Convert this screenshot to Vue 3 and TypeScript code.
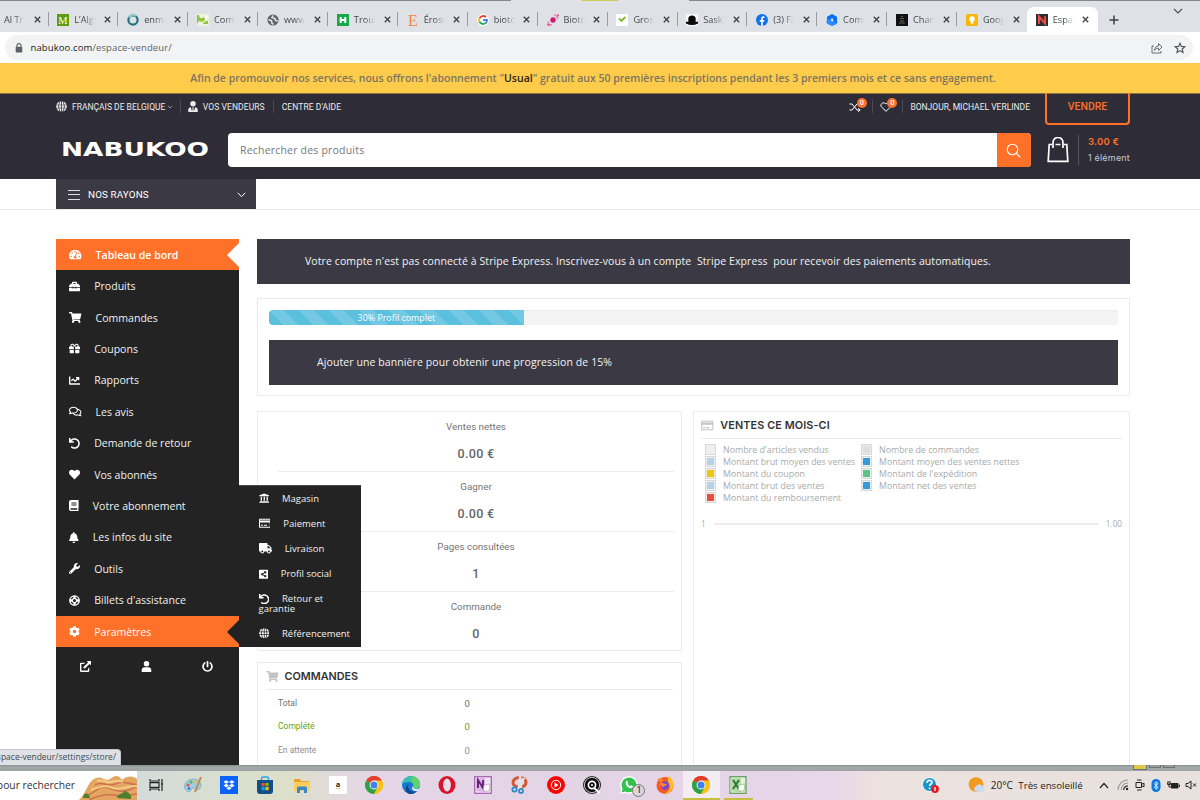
<script setup lang="ts">
interface Glyph { w: number; h: number; body: string }

const cartPath = '<path d="M528.12 301.319l47.273-208C578.806 78.301 567.391 64 551.99 64H159.208l-9.166-44.81C147.758 8.021 137.93 0 126.529 0H24C10.745 0 0 10.745 0 24v16c0 13.255 10.745 24 24 24h69.883l70.248 343.435C147.325 417.1 136 435.222 136 456c0 30.928 25.072 56 56 56s56-25.072 56-56c0-15.674-6.447-29.835-16.824-40h209.647C430.447 426.165 424 440.326 424 456c0 30.928 25.072 56 56 56s56-25.072 56-56c0-22.172-12.888-41.332-31.579-50.405l5.517-24.276c3.413-15.018-8.002-29.319-23.403-29.319H218.117l-6.545-32h293.145c11.206 0 20.92-7.754 23.403-18.681z"/>'
const globe = '<path d="M238 10v160h-86c10-84 44-150 86-160zm36 0v160h86c-10-84-44-150-86-160zM148 202h90v108h-90c-5-36-5-72 0-108zm126 0h90c5 36 5 72 0 108h-90zM152 342h86v160c-42-10-76-76-86-160zm122 0h86c-10 84-44 150-86 160zM168 24c-28 36-44 86-50 146H24C50 98 102 46 168 24zm176 0c28 36 44 86 50 146h94C462 98 410 46 344 24zM14 202h100c-4 36-4 72 0 108H14c-8-36-8-72 0-108zm384 0h100c8 36 8 72 0 108H398c4-36 4-72 0-108zM24 342h94c6 60 22 110 50 146C102 466 50 414 24 342zm464 0h-94c-6 60-22 110-50 146 66-22 118-74 144-146z"/>'

const glyphs: Record<string, Glyph> = {
  gauge: { w: 576, h: 512, body: '<path fill-rule="evenodd" d="M288 32C129 32 0 161 0 320c0 53 14 102 39 145 6 10 16 15 27 15h444c11 0 21-5 27-15 25-43 39-92 39-145C576 161 447 32 288 32zm0 64a34 34 0 1 1 0 68 34 34 0 0 1 0-68zM96 384a34 34 0 1 1 0-68 34 34 0 0 1 0 68zm48-160a34 34 0 1 1 0-68 34 34 0 0 1 0 68zm206 204H226c-20-50 5-96 50-107l72-168c8-18 38-8 31 14l-63 170c31 21 46 55 34 91zm84-204a32 32 0 0 1-28-50 34 34 0 1 1 28 50zm46 160a34 34 0 1 1 0-68 34 34 0 0 1 0 68z"/>' },
  case: { w: 512, h: 512, body: '<path fill-rule="evenodd" d="M140 128V85c0-28 20-48 48-48h136c28 0 48 20 48 48v43h60l70 76c7 8 10 15 10 25v67H352v-24h-60v24h-72v-24h-60v24H0v-67c0-10 3-17 10-25l70-76zm52 0h128V90H192zM0 328h160v24h60v-24h72v24h60v-24h160v120c0 18-14 32-32 32H32c-18 0-32-14-32-32z"/>' },
  cart: { w: 576, h: 512, body: cartPath },
  gift: { w: 512, h: 512, body: '<path d="M32 448c0 18 14 32 32 32h160V320H32v128zm256 32h160c18 0 32-14 32-32V320H288v160zm192-320h-42c6-12 10-26 10-40a88 88 0 0 0-88-88c-41 0-67 21-103 70-36-49-62-70-103-70a88 88 0 0 0-88 88c0 14 4 28 10 40H32c-18 0-32 14-32 32v80c0 9 7 16 16 16h208V160h64v128h208c9 0 16-7 16-16v-80c0-18-14-32-32-32zm-326 0a40 40 0 0 1 0-80c21 0 32 3 86 80zm206 0h-86c54-77 64-80 86-80a40 40 0 0 1 0 80z"/>' },
  chart: { w: 512, h: 512, body: '<path d="M496 384H64V80c0-9-7-16-16-16H16C7 64 0 71 0 80v336c0 18 14 32 32 32h464c9 0 16-7 16-16v-32c0-9-7-16-16-16zM464 96H346c-21 0-32 26-17 41l32 32-73 74-74-74c-12-12-33-12-45 0l-68 68a16 16 0 0 0 0 23l22 22c7 7 17 7 23 0l46-45 73 73c13 13 33 13 46 0l96-96 32 32c15 15 41 4 41-17V112c0-9-7-16-16-16z"/>' },
  chat: { w: 576, h: 512, body: '<path fill-rule="evenodd" d="M532 386c27-27 44-61 44-98 0-80-76-146-172-158C374 74 297 32 208 32 93 32 0 104 0 192c0 37 17 71 44 98-15 31-37 55-38 56-6 7-8 16-4 25 3 8 12 13 21 13 52 0 96-18 126-36 6 1 12 3 19 3 30 58 107 97 200 97 20 0 40-2 59-7 30 18 74 39 126 39 9 0 18-5 21-13 4-9 2-18-4-25-1-1-23-25-38-56zM142 295c-24 16-38 24-62 31 6-12 13-30 21-53-29-24-53-43-53-81 0-62 72-112 160-112s160 50 160 112-72 112-160 112c-21 0-45-3-66-9zm292 96c-19 6-41 9-66 9-68 0-120-24-145-58 110-7 193-72 193-150v-10c62 14 112 52 112 106 0 38-24 57-53 81 8 23 15 41 21 53-24-7-38-15-62-31z"/>' },
  undo: { w: 512, h: 512, body: '<path d="M212.333 224.333H12c-6.627 0-12-5.373-12-12V12C0 5.373 5.373 0 12 0h48c6.627 0 12 5.373 12 12v78.112C117.773 39.279 184.26 7.47 258.175 8.007c136.906.994 246.448 111.623 246.157 248.532C504.041 393.258 393.12 504 256.333 504c-64.089 0-122.496-24.313-166.51-64.215-5.099-4.622-5.334-12.554-.467-17.42l33.967-33.967c4.474-4.474 11.662-4.717 16.401-.525C170.76 415.336 211.58 432 256.333 432c97.268 0 176-78.716 176-176 0-97.267-78.716-176-176-176-58.496 0-110.28 28.476-142.274 72.333h98.274c6.627 0 12 5.373 12 12v48c0 6.627-5.373 12-12 12z"/>' },
  heart: { w: 512, h: 512, body: '<path d="M462.3 62.6C407.5 15.9 326 24.3 275.7 76.2L256 96.5l-19.7-20.3C186.1 24.3 104.5 15.9 49.7 62.6c-62.8 53.6-66.1 149.8-9.9 207.9l193.5 199.8c12.5 12.9 32.8 12.9 45.3 0l193.5-199.8c56.3-58.1 53-154.3-9.8-207.9z"/>' },
  book: { w: 448, h: 512, body: '<path fill-rule="evenodd" d="M448 360V24c0-13-11-24-24-24H96C43 0 0 43 0 96v320c0 53 43 96 96 96h328c13 0 24-11 24-24v-16c0-8-3-14-9-19-4-15-4-59 0-74 6-4 9-11 9-19zM110 120h240v44H110zm0 92h240v44H110zM381 448H96a32 32 0 0 1 0-64h285c-2 17-2 47 0 64z"/>' },
  bell: { w: 448, h: 512, body: '<path d="M224 512c35.32 0 63.97-28.65 63.97-64H160.03c0 35.35 28.65 64 63.97 64zm215.39-149.71c-19.32-20.76-55.47-51.99-55.47-154.29 0-77.7-54.48-139.9-127.94-155.16V32c0-17.67-14.32-32-31.98-32s-31.98 14.33-31.98 32v20.84C118.56 68.1 64.08 130.3 64.08 208c0 102.3-36.15 133.53-55.47 154.29-6 6.45-8.66 14.16-8.61 21.71.11 16.4 12.98 32 32.1 32h383.8c19.12 0 32-15.6 32.1-32 .05-7.55-2.61-15.27-8.61-21.71z"/>' },
  wrench: { w: 512, h: 512, body: '<path fill-rule="evenodd" d="M508 109c-2-9-14-12-20-5l-75 74-68-11-11-68 74-74c7-7 4-18-5-21-47-12-100 1-137 38-40 40-51 98-35 148L19 402a64 64 0 0 0 91 91l212-212c50 16 108 5 148-35 37-37 50-90 38-137zM64 472a24 24 0 1 1 0-48 24 24 0 0 1 0 48z"/>' },
  ring: { w: 512, h: 512, body: '<g fill="none" stroke="currentColor"><circle cx="256" cy="256" r="220" stroke-width="56"/><circle cx="256" cy="256" r="100" stroke-width="50"/><path d="M256 30v126M256 356v126M30 256h126M356 256h126" stroke-width="110"/></g>' },
  gear: { w: 512, h: 512, body: '<path fill-rule="evenodd" d="M487 316l-42-25c4-23 4-47 0-70l42-25c5-3 8-9 6-14-11-36-30-68-55-95-4-4-10-5-15-2l-43 24c-18-15-39-27-61-35V25c0-6-4-11-10-12-36-8-74-8-109 0-6 1-10 6-10 12v49c-22 8-43 20-61 35L86 85c-5-3-11-2-15 2-25 27-44 59-55 95-2 5 1 11 6 14l42 25c-4 23-4 47 0 70l-42 25c-5 3-8 9-6 14 11 36 30 68 55 95 4 4 10 5 15 2l43-24c18 15 39 27 61 35v49c0 6 4 11 10 12 36 8 74 8 109 0 6-1 10-6 10-12v-49c22-8 43-20 61-35l43 24c5 3 11 2 15-2 25-27 44-59 55-95 2-5-1-11-6-14zM256 336a80 80 0 1 1 0-160 80 80 0 0 1 0 160z"/>' },
  bank: { w: 512, h: 512, body: '<path d="M256 20L16 110v45h480v-45zM80 180h64v200H80zm144 0h64v200h-64zm144 0h64v200h-64zM46 400h420l12 38H34zM10 452h492v40H10z"/>' },
  card: { w: 576, h: 512, body: '<path fill-rule="evenodd" d="M48 32h480c26 0 48 21 48 48v352c0 26-22 48-48 48H48c-27 0-48-22-48-48V80c0-27 21-48 48-48zm2 50v34h476V82zm0 138v212h476V220zM96 330h100v50H96zm144 0h150v50H240z"/>' },
  truck: { w: 640, h: 512, body: '<path fill-rule="evenodd" d="M624 352h-16V244c0-13-5-25-14-34L494 110c-9-9-21-14-34-14h-44V48c0-26-22-48-48-48H48C22 0 0 22 0 48v320c0 26 22 48 48 48h16a96 96 0 0 0 192 0h128a96 96 0 0 0 192 0h48c9 0 16-7 16-16v-32c0-9-7-16-16-16zM160 464a48 48 0 1 1 0-96 48 48 0 0 1 0 96zm320 0a48 48 0 1 1 0-96 48 48 0 0 1 0 96zm80-208H416V144h44l100 100z"/>' },
  share: { w: 448, h: 512, body: '<path fill-rule="evenodd" d="M48 32h352c26 0 48 22 48 48v352c0 26-22 48-48 48H48c-26 0-48-22-48-48V80c0-26 22-48 48-48zm256 264c-13 0-25 5-35 13l-62-37v-32l62-37a56 56 0 1 0-20-35l-65 39a56 56 0 1 0 0 98l65 39a56 56 0 1 0 55-48z"/>' },
  globe: { w: 512, h: 512, body: globe },
  person: { w: 448, h: 512, body: '<circle cx="224" cy="128" r="128"/><path d="M0 490v-50c0-88 60-144 134-144h180c74 0 134 56 134 144v50c0 12-10 22-24 22H24c-14 0-24-10-24-22z"/>' },
  agent: { w: 448, h: 512, body: '<circle cx="224" cy="128" r="128"/><path d="M0 490v-70c0-70 60-120 124-124l56 180 24-110-24-60h88l-24 60 24 110 56-180c64 4 124 54 124 124v70c0 12-10 22-24 22H24c-14 0-24-10-24-22z"/>' },
  external: { w: 512, h: 512, body: '<path d="M432 300v170c0 22-18 40-40 40H42c-22 0-42-18-42-40V120c0-22 20-42 42-42h200l-62 62H64v306h304V364zM312 0h200v200l-66-66-230 230-68-68 230-230z"/>' },
  power: { w: 512, h: 512, body: '<path d="M400 54a248 248 0 1 1-288 0c12-8 28-4 35 8l16 28c6 11 3 24-6 31a168 168 0 1 0 198 0c-10-7-13-20-7-31l16-28c8-12 24-16 36-8zM296 264V24c0-13-11-24-24-24h-32c-13 0-24 11-24 24v240c0 13 11 24 24 24h32c13 0 24-11 24-24z"/>' },
}

const sidebar = [
  { icon: 'gauge', label: 'Tableau de bord' },
  { icon: 'case', label: 'Produits' },
  { icon: 'cart', label: 'Commandes' },
  { icon: 'gift', label: 'Coupons' },
  { icon: 'chart', label: 'Rapports' },
  { icon: 'chat', label: 'Les avis' },
  { icon: 'undo', label: 'Demande de retour' },
  { icon: 'heart', label: 'Vos abonnés' },
  { icon: 'book', label: 'Votre abonnement' },
  { icon: 'bell', label: 'Les infos du site' },
  { icon: 'wrench', label: 'Outils' },
  { icon: 'ring', label: "Billets d'assistance" },
  { icon: 'gear', label: 'Paramètres' },
]

const submenu = [
  { icon: 'bank', label: 'Magasin' },
  { icon: 'card', label: 'Paiement' },
  { icon: 'truck', label: 'Livraison' },
  { icon: 'share', label: 'Profil social' },
  { icon: 'undo', label: 'Retour et garantie' },
  { icon: 'globe', label: 'Référencement' },
]

const chromeLogo = '<circle cx="9" cy="9" r="9" fill="#fbc116"/><path d="M9 9L1.2 4.5A9 9 0 0 1 16.8 4.5z" fill="#e33b2e"/><path d="M1.2 4.5A9 9 0 0 0 9 18l3.9-6.8L9 9z" fill="#2da24c"/><path d="M9 4.5h7.8A9 9 0 0 1 9 18l3.9-6.8z" fill="#fbc116"/><circle cx="9" cy="9" r="4.4" fill="#fff"/><circle cx="9" cy="9" r="3.5" fill="#3f7fe8"/>'

const tabs = [
  { label: 'L’Algo', art: '<rect width="12" height="12" fill="#5f9c0b"/><text x="6" y="9.8" font-size="10.5" text-anchor="middle" fill="#fff" font-family="Liberation Serif">M</text>' },
  { label: 'enmo', art: '<circle cx="6" cy="6" r="4.6" fill="none" stroke="#23727f" stroke-width="2.2"/><path d="M2 3.6A4.7 4.7 0 0 1 9 2" fill="none" stroke="#8cc7cf" stroke-width="2"/>' },
  { label: 'Comp', art: '<rect width="12" height="12" fill="#eef3df"/><path d="M0 1h2l1 3h3l1-2 1 4-3 2-3-1-2 3zM6 9l3-2h2v3H6z" fill="#93c83e"/><circle cx="9" cy="3" r="1.500" fill="#fff"/>' },
  { label: 'www', art: '<circle cx="6" cy="6" r="5.6" fill="#5f6368"/><path d="M1.5 5.5l3 1.2.5 2.6 1.5 1M6 1.5L5 3.5l3 1 .4 2 2.3.6" fill="none" stroke="#e8eaed" stroke-width="1.5"/>' },
  { label: 'Troub', art: '<rect width="12" height="12" fill="#18a849"/><path d="M3.7 3v6M8.3 3v6M3.7 6h4.6" stroke="#fff" stroke-width="2"/>' },
  { label: 'Érosio', art: '<text x="6" y="11.6" font-size="16" text-anchor="middle" fill="#f1853b" font-family="Liberation Serif">E</text>' },
  { label: 'bioto', art: '<circle cx="6" cy="6" r="6" fill="#fff"/><g fill="none" stroke-width="1.9"><path d="M9 3.2A4 4 0 0 0 2.6 4.2" stroke="#e8453c"/><path d="M2.5 4.2a4 4 0 0 0 0 3.6" stroke="#f7b90f"/><path d="M2.5 7.8A4 4 0 0 0 8.8 8.9" stroke="#34a853"/><path d="M6 6h4a4 4 0 0 1-1.3 3" stroke="#4285f4"/></g>' },
  { label: 'Bioto', art: '<circle cx="6" cy="6" r="2.7" fill="#d5196f"/><path d="M7 1.5c2-1 3.5 1 3.6 3.5M5 10.5c-2 1-4-.6-4-3" fill="none" stroke="#e58ab0" stroke-width="1.6"/><path d="M10 0l2 1-1 2zM0 10l1 2 2-1z" fill="#d5196f"/>' },
  { label: 'Gross', art: '<rect width="12" height="12" fill="#fff"/><path d="M3 4.4L5.4 7l4-4" fill="none" stroke="#80b92c" stroke-width="1.9"/>' },
  { label: 'Saski', art: '<rect width="12" height="12" fill="#f8f8f8"/><path d="M2.3 8V4.5c0-4 7.4-4 7.4 0V8l2.3-.5v2c-4 2-8 2-12 0v-2z" fill="#0a0a0a"/>' },
  { label: '(3) Fa', art: '<circle cx="6" cy="6" r="6" fill="#1270ea"/><path d="M5.2 12V7.7H3.7V5.9h1.5V4.5c0-1.8 1.2-2.4 3.2-2.1v1.5c-1.2-.1-1.6.2-1.6 1v1h1.6l-.3 1.8H6.8V12z" fill="#fff"/>' },
  { label: 'Comp', art: '<path fill-rule="evenodd" d="M6 0l5 2.800v6.400L6 12 1 9.200V2.800zM6 3.500L4 7.500h4z" fill="#0b6ff5"/><path d="M0 8l3.500-4L6 8.500H12L9 11H3z" fill="#2b8cff"/>' },
  { label: 'Chan', art: '<rect width="12" height="12" fill="#111"/><path d="M3 9h6M4 7h4M4 4.5h4M5 2.5h2" stroke="#6b6b6b" stroke-width=".9"/>' },
  { label: 'Goog', art: '<rect width="12" height="12" rx="1.5" fill="#fbb605"/><circle cx="6" cy="5" r="2.8" fill="#fff"/><path d="M4.7 7h2.6v2.6H4.7z" fill="#fff"/>' },
  { label: 'Espac', art: '<rect width="12" height="12" fill="#2d2d39"/><path d="M3 9.8V2.6l6 6.8V2.2" fill="none" stroke="#ee4d3f" stroke-width="2.1"/>' },
]

const apps = [
  { name: 'tasks', art: '<path d="M3 3v2h9V3M3 15v-2h9v2M3 6.700h9v4.600H3zM15 3v12M14 8h2.200" fill="none" stroke="#222" stroke-width="1.2"/>' },
  { name: 'paint', art: '<path d="M9 3C3 3-1 8 1 13c2 4 6 3 6 1s2-3 4-1 6 0 6-4-4-6-8-6z" fill="#9fcbe4" stroke="#6fa2bf" stroke-width=".6"/><circle cx="4" cy="9" r="1.5" fill="#e2583e"/><circle cx="7" cy="6" r="1.5" fill="#5fb34d"/><circle cx="11" cy="6" r="1.4" fill="#eec33f"/><circle cx="5" cy="12.500" r="1.300" fill="#3e73c8"/><path d="M17 1l-6 15" stroke="#c98a4b" stroke-width="2"/>' },
  { name: 'dropbox', art: '<rect width="18" height="18" fill="#0a62fb"/><path d="M6.200 4.200L3.400 6l2.800 1.800L9 6zM11.800 4.200L9 6l2.800 1.800L14.600 6zM6.200 7.800L3.400 9.600l2.800 1.800L9 9.600zM11.800 7.800L9 9.600l2.800 1.800 2.800-1.800zM9 10.600l-2.600 1.700L9 14l2.600-1.700z" fill="#fff"/>' },
  { name: 'store', art: '<path d="M5.500 4V2.500c0-1 .5-1.500 1.500-1.500h4c1 0 1.500.5 1.500 1.500V4" fill="none" stroke="#31a6e6" stroke-width="1.500"/><path d="M1 4h16v11c0 2-1 3-3 3H4c-2 0-3-1-3-3z" fill="#114f86"/><path d="M5.500 7h3.200v3.200H5.500z" fill="#f04f23"/><path d="M9.400 7h3.200v3.200H9.400z" fill="#80bb03"/><path d="M5.500 11h3.200v3.200H5.500z" fill="#07a5ef"/><path d="M9.400 11h3.200v3.200H9.400z" fill="#ffb902"/>' },
  { name: 'files', art: '<path d="M1 3h6l1.500 2H16v3H1z" fill="#e3a52d"/><path d="M1 6h16v9H1z" fill="#fbcf5c"/><path d="M4 17v-5c0-1 .6-1.600 1.600-1.600h6.800c1 0 1.600.6 1.600 1.600v5h-3v-3H7v3z" fill="#3489d1"/>' },
  { name: 'amazon', art: '<rect width="18" height="18" fill="#fff"/><text x="9" y="10.500" font-size="7.500" font-weight="700" text-anchor="middle" fill="#222" font-family="Open Sans">a</text><path d="M6.500 12c2 1 3 1 5 0" stroke="#f2ae55" stroke-width=".8" fill="none"/>' },
  { name: 'chrome', art: chromeLogo },
  { name: 'edge', art: '<circle cx="9" cy="9" r="9" fill="#1679cf"/><path d="M0 8C1 1 8-1 13 1c5 3 6 8 4 11-2 1-6 1-6-1 1-3-1-5-4-5S1 7 0 8z" fill="#38bfb0"/><path d="M10 0c5 0 9 5 8 9s-6 4-7 2c1-2 1-4-2-5z" fill="#5dd36b"/><path d="M6.500 8c-2 5 3 9 8 7-2 3-6 4-9 2-3-3-2-7 1-9z" fill="#10488f"/><path d="M11 10c-1 2 3 4 6.500 2.300L16 15c-4 1-8-2-5-5z" fill="#e5e4ee"/>' },
  { name: 'opera', art: '<ellipse cx="9" cy="9" rx="8.500" ry="9" fill="#d8132c"/><ellipse cx="9" cy="9" rx="3.900" ry="6.500" fill="#eaddea"/>' },
  { name: 'onenote', art: '<rect x=".7" y=".7" width="16.600" height="16.600" fill="#f0e3f2" stroke="#a35fae" stroke-width="1.200"/><path d="M1 3l10-2v15L1 15z" fill="#d9b5e0"/><path d="M4 12V4l5 8V4" fill="none" stroke="#632274" stroke-width="1.900"/><path d="M10 9l6-1-1 7H9z" fill="#fff" stroke="#b785c0" stroke-width=".6"/>' },
  { name: 'snip', art: '<ellipse cx="8.500" cy="6.500" rx="6.500" ry="5" fill="none" stroke="#d4572d" stroke-width="3"/><path d="M9 0l1 12M13 2L7 13" stroke="#dfe5ea" stroke-width="2.600"/><circle cx="3.500" cy="13.500" r="2.200" fill="none" stroke="#2b87c8" stroke-width="1.700"/><circle cx="10" cy="15" r="2" fill="none" stroke="#2b87c8" stroke-width="1.700"/>' },
  { name: 'music', art: '<circle cx="9" cy="9" r="9" fill="#f90404"/><circle cx="9" cy="9" r="4.700" fill="none" stroke="#fff" stroke-width="1"/><path d="M7.500 6.500l4 2.500-4 2.500z" fill="#fff"/>' },
  { name: 'quest', art: '<circle cx="9" cy="9" r="9" fill="#222"/><circle cx="9" cy="9" r="7.600" fill="#0d0d0d" stroke="#ddd" stroke-width=".9"/><circle cx="9" cy="9" r="3.600" fill="none" stroke="#fff" stroke-width="1.700"/><circle cx="9" cy="9" r="1" fill="#fff"/><path d="M11 12l6 5" stroke="#fff" stroke-width="1.800"/>' },
  { name: 'whatsapp', art: '<path d="M0 18l1.400-4.700A8.800 8.800 0 1 1 5 16.700z" fill="#fff"/><path d="M1.600 16.400l1-3.700A7.400 7.400 0 1 1 5.400 15.400z" fill="#33c24d"/><path d="M6 5.200c1-1.200 1.600 0 2 1.200 0 .8-1 1 0 2.200s1.800 1.600 2.400 1.300c.8-1 1-.8 2 0 1 .5.300 2-1 2.300C8 12.600 4.500 8 6 5.200z" fill="#fff"/>' },
  { name: 'firefox', art: '<circle cx="9" cy="9.500" r="8.500" fill="#f9572d"/><path d="M12 0c4 2 6 6 5.500 10-1 5-5 8-10 8 5-2 7-5 6-9-1-2-2-4-1.500-9z" fill="#fdbd2e"/><path d="M1 4c2-2 4-2 6-1L6 6z" fill="#f98b2a"/><circle cx="9" cy="9.500" r="4.200" fill="#7b45cf"/><path d="M4 7c3-1 4 1 7 1-1 2-3 2-4 3-2-1-3-2-3-4z" fill="#fb8a2b"/>' },
  { name: 'chrome-active', art: chromeLogo },
  { name: 'excel', art: '<rect x="1" y=".7" width="16" height="16.600" fill="#e4f0dd" stroke="#5c9d54" stroke-width="1.200"/><path d="M1 3l11-2v16L1 15z" fill="#b9dbab"/><path d="M4 4l6 9M10 4l-6 9" stroke="#2c7c37" stroke-width="2.200"/><path d="M10 9l6-1-1 7H9z" fill="#fff" stroke="#73b064" stroke-width=".6"/>' },
]

const stats = [
  { label: 'Ventes nettes', value: '0.00 €' },
  { label: 'Gagner', value: '0.00 €' },
  { label: 'Pages consultées', value: '1' },
  { label: 'Commande', value: '0' },
]

const orders = [
  { label: 'Total', value: '0', tone: 'plain' },
  { label: 'Complété', value: '0', tone: 'green' },
  { label: 'En attente', value: '0', tone: 'faint' },
]

const legend = [
  [
    { label: "Nombre d'articles vendus", tone: 'ice' },
    { label: 'Montant brut moyen des ventes', tone: 'sky' },
    { label: 'Montant du coupon', tone: 'yellow' },
    { label: 'Montant brut des ventes', tone: 'sky' },
    { label: 'Montant du remboursement', tone: 'red' },
  ],
  [
    { label: 'Nombre de commandes', tone: 'silver' },
    { label: 'Montant moyen des ventes nettes', tone: 'blue' },
    { label: "Montant de l'expédition", tone: 'green' },
    { label: 'Montant net des ventes', tone: 'blue' },
  ],
]

const iconWidth = (name: string, size: number) => (glyphs[name].w / 512) * size
const viewBox = (name: string) => `0 0 ${glyphs[name].w} ${glyphs[name].h}`
</script>

<template>
  <div class="screen">
    <div class="tabstrip">
      <span class="edge-mark"></span>
      <div class="tab first"><span class="tab-label">Al Trip</span><svg class="close" viewBox="0 0 7 7"><path d="M.8.800l5.400 5.400M6.200.800L.8 6.200" /></svg></div>
      <div v-for="(t, i) in tabs" :key="i" class="tab" :class="{ active: i === tabs.length - 1, before: i === tabs.length - 2 }">
        <svg class="favicon" viewBox="0 0 12 12" v-html="t.art"></svg>
        <span class="tab-label">{{ t.label }}</span>
        <svg class="close" viewBox="0 0 7 7"><path d="M.8.800l5.400 5.400M6.200.800L.8 6.200" /></svg>
      </div>
      <svg class="plus" viewBox="0 0 10 10"><path d="M5 .5v9M.5 5h9" stroke="#3c4043" stroke-width="1.5" /></svg>
      <svg class="tab-more" viewBox="0 0 10 6"><path d="M1 1l4 4 4-4" fill="none" stroke="#4a4e52" stroke-width="1.1" /></svg>
    </div>

    <div class="toolbar">
      <div class="address">
        <svg class="lock" viewBox="0 0 8 10"><path d="M2 4V2.600a2 2 0 0 1 4 0V4" fill="none" stroke="#5f6368" stroke-width="1.100" /><rect x=".7" y="3.800" width="6.600" height="5.600" rx=".7" fill="#5f6368" /></svg>
        <span class="url"><b>nabukoo.com</b>/espace-vendeur/</span>
        <svg class="share" viewBox="0 0 12 12"><path d="M3 4H1v7h9V9M3.500 8.500c.3-3.200 2-4.500 4-4.500V1.500L11 5 7.500 8.500V6.200c-1.800 0-3 .6-4 2.300z" fill="none" stroke="#6a6e73" stroke-width="1" /></svg>
        <svg class="star" viewBox="0 0 12 12"><path d="M6 1.300l1.400 3.100 3.400.3L8.200 7l.8 3.400L6 8.600l-3 1.800L3.800 7 1.200 4.700l3.400-.3z" fill="none" stroke="#54585d" stroke-width="1.200" /></svg>
      </div>
    </div>

    <div class="promo"><p>Afin de promouvoir nos services, nous offrons l'abonnement "<b>Usual</b>" gratuit aux 50 premières inscriptions pendant les 3 premiers mois et ce sans engagement.</p></div>

    <header class="header">
      <div class="topbar">
        <svg class="top-icon" :viewBox="viewBox('globe')" v-html="glyphs.globe.body"></svg>
        <span class="lang">FRANÇAIS DE BELGIQUE</span>
        <svg class="caret" viewBox="0 0 6 4"><path d="M.8.8L3 3 5.200.8" fill="none" stroke="#aaa" stroke-width=".8" /></svg>
        <i class="sep"></i>
        <svg class="agent" :viewBox="viewBox('agent')" v-html="glyphs.agent.body"></svg>
        <span class="vendors">VOS VENDEURS</span>
        <i class="sep"></i>
        <span class="help">CENTRE D'AIDE</span>
        <div class="top-right">
          <div class="badge-icon">
            <svg viewBox="0 0 12 10"><path d="M.5 2h2.500l5 6H11M.5 8h2.500l5-6H11M9 .3L11.200 2 9 3.700M9 6.300L11.200 8 9 9.700" fill="none" stroke="#fff" stroke-width="1" /></svg>
            <b>0</b>
          </div>
          <i class="sep"></i>
          <div class="badge-icon">
            <svg viewBox="0 0 12 10"><path d="M6 9.300L1.500 5C-.5 2.500 3-1 6 2c3-3 6.500.5 4.500 3z" fill="none" stroke="#fff" stroke-width="1" /></svg>
            <b>0</b>
          </div>
          <i class="sep"></i>
          <span class="hello">BONJOUR, MICHAEL VERLINDE</span>
          <span class="sell">VENDRE</span>
        </div>
      </div>
      <div class="searchrow">
        <svg class="logo" viewBox="0 0 148 18"><text x="-1" y="15" textLength="148" lengthAdjust="spacingAndGlyphs">NABUKOO</text></svg>
        <div class="search">
          <span>Rechercher des produits</span>
          <button type="button" aria-label="Rechercher">
            <svg viewBox="0 0 15 15"><circle cx="6.500" cy="6.500" r="5.300" fill="none" stroke="#fff" stroke-width="1.100" /><path d="M10.500 10.500l3.800 3.800" stroke="#fff" stroke-width="1.200" /></svg>
          </button>
        </div>
        <svg class="bag" viewBox="0 0 22 26"><path d="M5 7.500H2.200L1.200 24.300h19.600L19.800 7.500H17M8.500 7.500h5" fill="none" stroke="#fff" stroke-width="1.700" /><path d="M6 11V5.500a5 5 0 0 1 10 0V11" fill="none" stroke="#fff" stroke-width="1.700" /></svg>
        <div class="basket"><b>3.00 €</b><span>1 élément</span></div>
      </div>
    </header>

    <nav class="nav">
      <div class="departments">
        <i class="burger"></i>
        <span>NOS RAYONS</span>
        <svg viewBox="0 0 9 6"><path d="M.7.800l3.800 3.800L8.300.800" fill="none" stroke="#fff" stroke-width="1" /></svg>
      </div>
    </nav>

    <main class="main">
      <aside class="sidebar">
        <div v-for="(s, i) in sidebar" :key="s.label" class="item" :class="{ current: i === 0, hover: i === 12 }">
          <svg :viewBox="viewBox(s.icon)" :style="{ width: iconWidth(s.icon, 11) + 'px' }" v-html="glyphs[s.icon].body"></svg>
          <span>{{ s.label }}</span>
        </div>
        <div class="tools">
          <svg v-for="n in ['external', 'person', 'power']" :key="n" :viewBox="viewBox(n)" v-html="glyphs[n].body"></svg>
        </div>
        <div class="submenu">
          <div v-for="m in submenu" :key="m.label" class="sub" :class="{ tall: m.label.startsWith('Retour') }">
            <svg :viewBox="viewBox(m.icon)" :style="{ width: iconWidth(m.icon, 10.5) + 'px' }" v-html="glyphs[m.icon].body"></svg>
            <span>{{ m.label }}</span>
          </div>
        </div>
      </aside>

      <section class="content">
        <div class="notice">Votre compte n'est pas connecté à Stripe Express. Inscrivez-vous à un compte &nbsp;Stripe Express &nbsp;pour recevoir des paiements automatiques.</div>

        <div class="panel progress-panel">
          <div class="track"><div class="bar">30% Profil complet</div></div>
          <div class="notice banner-hint">Ajouter une bannière pour obtenir une progression de 15%</div>
        </div>

        <div class="columns">
          <div class="left">
            <div class="panel stats">
              <div v-for="s in stats" :key="s.label" class="stat">
                <span>{{ s.label }}</span>
                <b>{{ s.value }}</b>
              </div>
            </div>
            <div class="panel orders">
              <h3>
                <svg :viewBox="viewBox('cart')" v-html="glyphs.cart.body"></svg>COMMANDES
              </h3>
              <div v-for="o in orders" :key="o.label" class="order" :class="o.tone">
                <span>{{ o.label }}</span><em>{{ o.value }}</em>
              </div>
            </div>
          </div>

          <div class="panel sales">
            <h3>
              <svg :viewBox="viewBox('card')" v-html="glyphs.card.body"></svg>VENTES CE MOIS-CI
            </h3>
            <div class="legend">
              <ul v-for="(col, c) in legend" :key="c">
                <li v-for="(l, i) in col" :key="i"><i :class="l.tone"></i>{{ l.label }}</li>
              </ul>
            </div>
            <div class="axis"><span>1</span><i></i><span>1.00</span></div>
          </div>
        </div>
      </section>
      <div class="status">espace-vendeur/settings/store/</div>
    </main>

    <div class="window-edge"><i class="view on"></i><i class="view"></i><i class="view"></i></div>

    <footer class="taskbar">
      <div class="finder">
        <span>pour rechercher</span>
        <svg viewBox="0 0 58 24"><path d="M0 24C8 17 9 3 18 2c5-2 8 4 13 1 5-4 9-4 12 1 5-5 12-4 15-1v21z" fill="#e3a560" /><path d="M6 20c10-2 14-12 24-8s18 5 28-2M10 24c12-6 22-6 30-4s12-2 18-2M16 9c8-5 12 3 20-1s14 0 22 1" fill="none" stroke="#cf7350" stroke-width="1.600" /><path d="M12 14c10-4 16-5 22-2s16-3 24-2M18 5c6-2 8 2 13 1s10-2 13 0" fill="none" stroke="#f3cc84" stroke-width="2" /><path d="M4 22c0-6 6-6 7 0zM38 22c1-6 5-2 7-7 4 0 8 4 7 8z" fill="#4f7f2c" /></svg>
      </div>
      <div class="apps">
        <div v-for="a in apps" :key="a.name" class="app" :class="a.name">
          <svg viewBox="0 0 18 18" v-html="a.art"></svg>
          <b v-if="a.name === 'whatsapp'">1</b>
        </div>
      </div>
      <div class="tray">
        <svg class="t-help" viewBox="0 0 17 16"><circle cx="7.500" cy="7.500" r="7" fill="#1594c9" stroke="#fff" /><path d="M5 6c0-3.500 5-3.500 5-.7 0 1.700-2.400 1.700-2.400 3.700M7.600 10.500v1.700" fill="none" stroke="#fff" stroke-width="1.700" /><circle cx="13" cy="12" r="3.900" fill="#e51a22" /><path d="M13 10v4" stroke="#fff" stroke-width="1.200" /></svg>
        <svg class="t-weather" viewBox="0 0 18 16"><circle cx="8" cy="7.500" r="7.300" fill="#f29a20" /><path d="M8 14.500a3 3 0 0 1 0-5.500 4 4 0 0 1 7 .500 2.600 2.600 0 0 1 0 5z" fill="#c9daf2" /></svg>
        <span class="temp">20°C</span>
        <span class="sky-text">Très ensoleillé</span>
        <svg class="t-up" viewBox="0 0 10 7"><path d="M1 6l4-4.500L9 6" fill="none" stroke="#222" stroke-width="1.200" /></svg>
        <svg class="t-wifi" viewBox="0 0 12 12"><path d="M1 11A10 10 0 0 1 11 1M4 11a7 7 0 0 1 7-7" fill="none" stroke="#a19c9b" stroke-width="1.200" /><path d="M6.500 11A5 5 0 0 1 11 6.800" fill="none" stroke="#333" stroke-width="1.200" /><circle cx="10" cy="10" r="1.200" fill="#222" /></svg>
        <svg class="t-cam" viewBox="0 0 10 12"><path d="M1 3.500h5.500v5H1zM6.500 5.200l2.500-1v3.600l-2.500-1M2 1h4.500M2 11h4.500" fill="none" stroke="#222" stroke-width="1" /></svg>
        <svg class="t-bt" viewBox="0 0 10 13"><rect x=".5" width="9" height="13" rx="4.500" fill="#0a78e3" /><path d="M2.800 4.200l4.400 4.300L5 10.400V2.600l2.200 2-4.400 4.200" fill="none" stroke="#fff" stroke-width=".9" /></svg>
        <svg class="t-bat" viewBox="0 0 13 10"><rect x="4" y="3" width="7.500" height="5.500" rx=".8" fill="#222" /><path d="M12.400 4.600v2.400M1 1v1.500M3 1v1.500M.5 3h3v1.500h-3zM2 4.500v2.500h2" stroke="#222" fill="none" stroke-width="1" /></svg>
        <svg class="t-vol" viewBox="0 0 12 10"><path d="M1 3.500h2l3-2.500v8L3 6.500H1zM8 3.500l3 3M11 3.500l-3 3" fill="none" stroke="#222" stroke-width="1" /></svg>
      </div>
    </footer>
  </div>
</template>

<style>
body {
  margin: 0;
  background: #fff;
}
</style>

<style scoped>
* {
  box-sizing: border-box;
}

.screen {
  width: 1200px;
  height: 800px;
  overflow: hidden;
  display: flex;
  flex-direction: column;
  background: #fff;
  color: #777;
  font-family: "Open Sans", "Noto Sans", sans-serif;
}

svg {
  display: block;
  flex: none;
  fill: currentColor;
}

/* Browser chrome */
.tabstrip {
  position: relative;
  height: 32px;
  flex: none;
  display: flex;
  align-items: flex-end;
  background: #dee1e6;
  border-top: 1px solid #85878b;
}

.edge-mark {
  position: absolute;
  top: -1px;
  left: 511px;
  width: 178px;
  height: 1px;
  background: linear-gradient(90deg, #dee1e6 71px, #cfc954 71px, #cfc954 107px, #dee1e6 107px);
}

.tab {
  position: relative;
  width: 69.9px;
  height: 25px;
  flex: none;
  display: flex;
  align-items: center;
  padding-left: 8.800px;
}

.tab:not(.active):not(.before)::after {
  content: "";
  position: absolute;
  right: 0;
  top: 5px;
  width: 1px;
  height: 14px;
  background: #999ca1;
}

.tab.first {
  width: 48.500px;
  padding-left: 4px;
}

.tab.first .tab-label {
  margin-left: 0;
  width: 20px;
}

.tab.first .close {
  margin-left: 9.500px;
}

.tab.active {
  width: 71px;
  background: #fff;
  border-radius: 7px 7px 0 0;
}

.favicon {
  width: 12px;
  height: 12px;
}

.tab-label {
  width: 21px;
  margin-left: 5px;
  overflow: hidden;
  white-space: nowrap;
  font-size: 9.2px;
  line-height: 14px;
  color: #45494d;
  mask-image: linear-gradient(90deg, #000 50%, transparent 100%);
}

.close {
  width: 7px;
  height: 7px;
  margin-left: 8.700px;
  fill: none;
  stroke: #3f4347;
  stroke-width: 1.35;
}

.plus {
  width: 10px;
  height: 10px;
  margin: 0 0 7px 11px;
}

.tab-more {
  width: 10px;
  height: 6px;
  margin: 0 0 18px 54px;
}

.toolbar {
  height: 31px;
  flex: none;
  padding: 3px 7px 0 5px;
}

.address {
  height: 25px;
  border-radius: 13px;
  background: #f1f3f4;
  display: flex;
  align-items: center;
  padding: 0 7px 0 9.500px;
}

.lock {
  width: 8px;
  height: 10px;
}

.url {
  flex: 1;
  margin-left: 8px;
  font-size: 9.5px;
  letter-spacing: 0.11px;
  color: #5f6368;
}

.url b {
  font-weight: 400;
  color: #202124;
}

.share {
  width: 12px;
  height: 12px;
  margin-right: 11px;
}

.star {
  width: 12px;
  height: 12px;
}

.promo {
  height: 30.500px;
  flex: none;
  background: #ffcb4b;
  border-bottom: 1px solid #8d7440;
  color: #7b7660;
  font: 600 10.53px/30px "Open Sans", sans-serif;
  text-align: center;
  white-space: nowrap;
}

.promo p {
  margin: 0 0 0 -14px;
}

.promo b {
  font-weight: 600;
  color: #2a2615;
}

/* Shop header */
.header {
  height: 85.500px;
  flex: none;
  background: #2e2d37;
  color: #fff;
}

.topbar {
  height: 31.500px;
  display: flex;
  align-items: center;
  padding: 0 70px 5px 56px;
  font: 400 8.5px/12px Roboto, sans-serif;
  color: #ececee;
  white-space: nowrap;
}

.top-icon {
  width: 11px;
  height: 11px;
}

.lang {
  margin-left: 5px;
}

.caret {
  width: 6px;
  height: 4px;
  margin-left: 2px;
}

.sep {
  width: 1px;
  height: 13px;
  background: #4c4b55;
  margin: 0 7px;
}

.agent {
  width: 10px;
  height: 11px;
}

.vendors {
  margin-left: 4.500px;
  margin-right: 1px;
  letter-spacing: 0.08px;
}

.help {
  margin-left: 1px;
  letter-spacing: 0.08px;
}

.top-right {
  margin-left: auto;
  display: flex;
  align-items: center;
}

.badge-icon {
  position: relative;
  width: 15.500px;
}

.badge-icon svg {
  width: 12px;
  height: 10px;
}

.badge-icon b {
  position: absolute;
  left: 7.500px;
  top: -4px;
  width: 10px;
  height: 10px;
  border-radius: 5px;
  background: #ff7028;
  color: #fff;
  font: 500 7.500px/10px Roboto, sans-serif;
  text-align: center;
}

.sell {
  height: 32px;
  width: 85px;
  margin: 5px 0 0 15px;
  border: 2px solid #ff7028;
  border-top: 0;
  border-radius: 0 0 4px 4px;
  color: #ff7028;
  font: 500 10.5px/28px Roboto, sans-serif;
  text-align: center;
}

.searchrow {
  height: 34px;
  margin-top: 8px;
  display: flex;
  align-items: center;
  padding: 0 70px 0 62px;
}

.logo {
  width: 148px;
  height: 18px;
  overflow: visible;
}

.logo text {
  font: 700 19.5px "DejaVu Sans", sans-serif;
  fill: #fff;
}

.search {
  width: 803px;
  height: 34px;
  margin-left: 18px;
  display: flex;
  justify-content: space-between;
  align-items: center;
  background: #fff;
  border-radius: 4px;
  overflow: hidden;
  color: #777;
  font-size: 10.5px;
  letter-spacing: 0.2px;
}

.search span {
  padding-left: 12px;
}

.search button {
  width: 34px;
  height: 34px;
  padding: 0;
  border: 0;
  display: grid;
  place-items: center;
  background: #ff7028;
}

.search button svg {
  width: 15px;
  height: 15px;
}

.bag {
  width: 22px;
  height: 26px;
  margin-left: 16px;
}

.basket {
  height: 30px;
  margin-left: 9px;
  padding-left: 9px;
  border-left: 1px solid #55545d;
  display: flex;
  flex-direction: column;
  justify-content: space-between;
  font: 400 9px/14px Inter, sans-serif;
  letter-spacing: 0.2px;
  color: #c9c9cd;
  white-space: nowrap;
}

.basket b {
  font-weight: 600;
  font-size: 9.5px;
  color: #ff7028;
}

.nav {
  height: 31px;
  flex: none;
  padding-left: 56px;
  border-bottom: 1px solid #ebebeb;
}

.departments {
  width: 200px;
  height: 30px;
  display: flex;
  align-items: center;
  padding: 1px 10.500px 0 12px;
  background: #3b3a44;
  color: #fff;
  font: 400 9.8px/12px Roboto, sans-serif;
  letter-spacing: 0.15px;
}

.departments span {
  flex: 1;
  margin-left: 8px;
}

.departments svg {
  width: 9px;
  height: 6px;
}

.burger {
  width: 12px;
  height: 10px;
  background: linear-gradient(#ddd 0 1px, transparent 1px 4.500px, #ddd 4.500px 5.500px, transparent 5.500px 9px, #ddd 9px);
}

/* Dashboard */
.main {
  position: relative;
  height: 555px;
  flex: none;
  overflow: hidden;
  display: flex;
  gap: 18px;
  padding: 29px 70px 0 56px;
}

.sidebar {
  position: relative;
  width: 183px;
  height: 526px;
  flex: none;
  background: #232323;
  color: #fff;
}

.item {
  position: relative;
  height: 31.42px;
  display: flex;
  align-items: center;
  gap: 14px;
  padding-left: 13.200px;
  font-size: 10.55px;
  line-height: 16px;
  white-space: nowrap;
  color: #f1f1f1;
}

.item svg {
  height: 11px;
  color: #fff;
}

.item.current,
.item.hover {
  background: #ff7028;
  color: #fff;
}

.item.current {
  font-weight: 600;
}

.item.current::after,
.item.hover::after {
  content: "";
  position: absolute;
  right: 0;
  top: 4px;
  width: 12px;
  height: 24px;
  background: #fff;
  clip-path: polygon(100% 0, 100% 100%, 0 50%);
}

.item.hover::after {
  background: #232323;
}

.tools {
  display: flex;
  gap: 50px;
  padding: 13.500px 0 0 23.500px;
}

.tools svg {
  width: 11px;
  height: 11px;
}

.submenu {
  position: absolute;
  left: 183px;
  top: 245.500px;
  width: 122px;
  height: 162.500px;
  padding: 0 8px 0 19.500px;
  background: #232323;
  border-top: 1px solid #4b4b4b;
}

.sub {
  height: 25.2px;
  padding-top: 8px;
  font-size: 9.5px;
  line-height: 10px;
  color: #f1f1f1;
}

.sub.tall {
  height: 34.300px;
}

.sub svg {
  display: inline-block;
  vertical-align: -2px;
  height: 10.5px;
  margin: -2px 13px 0 0;
  color: #fff;
}

.content {
  flex: 1;
  min-width: 0;
}

.notice {
  height: 44.500px;
  padding-left: 48px;
  background: #3b3a44;
  color: #f2f2f2;
  font-size: 10.5px;
  letter-spacing: 0.095px;
  line-height: 44px;
  white-space: pre-wrap;
}

.panel {
  border: 1px solid #ebebeb;
  background: #fff;
}

.progress-panel {
  height: 98px;
  margin-top: 14.500px;
  padding: 11px;
}

.track {
  height: 15px;
  border-radius: 4px;
  background: #f4f4f4;
  box-shadow: inset 0 1px 1px #e9e9e9;
  overflow: hidden;
}

.bar {
  width: 30%;
  height: 100%;
  color: #fff;
  font-size: 8.9px;
  line-height: 16px;
  text-align: center;
  background: linear-gradient(45deg, rgba(255, 255, 255, 0.15) 25%, transparent 25%, transparent 50%, rgba(255, 255, 255, 0.15) 50%, rgba(255, 255, 255, 0.15) 75%, transparent 75%) 0 0 / 30px 30px #5bc0de;
  transform: scaleX(1);
}

.banner-hint {
  margin-top: 15px;
}

.columns {
  display: flex;
  gap: 11px;
  margin-top: 15px;
}

.left {
  width: 425px;
}

.stats {
  height: 240px;
  padding: 0 7px 0 20px;
}

.stat {
  height: 60px;
  display: flex;
  flex-direction: column;
  align-items: center;
  padding-top: 8px;
  border-bottom: 1px solid #ececec;
  font: 400 9.8px/14px Roboto, sans-serif;
  color: #757575;
}

.stat:last-child {
  border: 0;
}

.stat b {
  margin-top: 12px;
  font: 500 12.5px/16px Roboto, sans-serif;
  letter-spacing: 0.35px;
  color: #666;
}

.orders {
  height: 200px;
  margin-top: 11px;
  padding: 0 8px;
}

h3 {
  height: 27px;
  margin: 0;
  padding-top: 1px;
  display: flex;
  align-items: center;
  gap: 6px;
  border-bottom: 1px solid #ebebeb;
  color: #333;
  font: 600 10.8px/14px Inter, sans-serif;
}

.sales h3 {
  gap: 6.800px;
  letter-spacing: 0.12px;
}

h3 svg {
  width: 12.500px;
  height: 11px;
  color: #c4c4c4;
}

.order {
  height: 23.400px;
  display: flex;
  padding-left: 12px;
  font: 400 8.500px/27px Roboto, sans-serif;
  color: #707070;
}

.order span {
  width: 186.500px;
}

.order em {
  font-style: normal;
  font-size: 9.500px;
}

.order.green {
  color: #62a420;
}

.order.faint {
  color: #8e8e8e;
}

.sales {
  width: 437px;
  height: 400px;
  padding: 0 7px;
}

.legend {
  display: flex;
  padding-left: 4px;
  margin-top: 4.500px;
  font-size: 8.85px;
  line-height: 12px;
  color: #aaa;
  white-space: nowrap;
}

.legend ul {
  width: 156px;
  flex: none;
  margin: 0;
  padding: 0;
  list-style: none;
}

.legend li {
  display: flex;
  align-items: center;
  height: 12.050px;
}

.legend i {
  flex: none;
  width: 10.500px;
  height: 11px;
  margin-right: 7.500px;
  border: 1px solid #d8d8d8;
  box-shadow: inset 0 0 0 1px #eee;
}

.legend .ice { background: #ecf0f1; }
.legend .silver { background: #dbe1e3; }
.legend .sky { background: #b1d4ea; }
.legend .blue { background: #3498db; }
.legend .yellow { background: #f1c40f; }
.legend .green { background: #5cc488; }
.legend .red { background: #e74c3c; }

.axis {
  display: flex;
  align-items: center;
  gap: 8px;
  margin-top: 13.500px;
  font-size: 8.200px;
  line-height: 14px;
  color: #aaa;
}

.axis i {
  flex: 1;
  height: 1.500px;
  background: #ececec;
}

.status {
  position: absolute;
  left: 0;
  bottom: 0;
  width: 121px;
  height: 16px;
  padding-right: 4px;
  display: flex;
  justify-content: flex-end;
  overflow: hidden;
  background: #dee1e6;
  border: 1px solid #c3c6ca;
  border-width: 1px 1px 0 0;
  border-radius: 0 4px 0 0;
  color: #44484c;
  font-size: 8.5px;
  line-height: 14px;
  white-space: nowrap;
}

/* Desktop taskbar */
.window-edge {
  height: 6px;
  flex: none;
  display: flex;
  gap: 2px;
  padding-left: 1133px;
  background: linear-gradient(#8d9194, #a3a8ab 40%, #9da2a5);
}

.view {
  width: 12px;
  height: 3px;
  border: 1px solid #6e7275;
  border-top: 0;
}

.view.on {
  width: 14px;
  height: 5px;
  background: #dcc94c;
}

.taskbar {
  height: 29px;
  flex: none;
  display: flex;
  color: #222;
  background: linear-gradient(90deg, #d3dcda 137px, #dce0c9 280px, #e5d6e7 375px, #e3d4e5 580px, #e8d6ea 830px, #ece2de 880px, #e8e1de);
}

.finder {
  width: 137px;
  height: 28.500px;
  flex: none;
  display: flex;
  align-items: center;
  justify-content: flex-end;
  background: #fff;
  overflow: hidden;
  white-space: nowrap;
  font-size: 10.3px;
  color: #333;
}

.finder svg {
  width: 58px;
  height: 24px;
  margin: 5px 0 0 4px;
}

.apps {
  display: flex;
  padding-left: 1px;
}

.app {
  position: relative;
  width: 36.350px;
  height: 29px;
  display: flex;
  justify-content: center;
  padding-top: 5px;
}

.app svg {
  width: 18px;
  height: 18px;
}

.app b {
  position: absolute;
  left: 22px;
  top: 13px;
  width: 13px;
  height: 13px;
  border: 1px solid #777;
  border-radius: 50%;
  background: #dcd5dc;
  font: 400 9px/11px Roboto, sans-serif;
  text-align: center;
}

.chrome-active {
  background: #f3edf3;
  box-shadow: inset 0 -2px #c7c03e;
}

.excel::after {
  content: "";
  position: absolute;
  left: 4px;
  right: 3px;
  bottom: 0;
  height: 2px;
  background: #c7c03e;
}

.tray {
  flex: 1;
  display: flex;
  align-items: center;
  padding-left: 166px;
  padding-bottom: 1px;
  font-size: 10px;
  white-space: nowrap;
}

.t-help { width: 17px; height: 16px; }
.t-weather { width: 18px; height: 16px; margin-left: 29px; }
.temp { margin-left: 5px; width: 22px; }
.sky-text { margin-left: 5.500px; width: 66px; font-size: 9.7px; }
.t-up { width: 10px; height: 7px; margin-left: 14.500px; }
.t-wifi { width: 12px; height: 12px; margin-left: 8px; }
.t-cam { width: 10px; height: 12px; margin-left: 6px; }
.t-bt { width: 10px; height: 13px; margin-left: 6.500px; }
.t-bat { width: 13px; height: 10px; margin-left: 6px; }
.t-vol { width: 12px; height: 10px; margin-left: 4.500px; }
</style>
